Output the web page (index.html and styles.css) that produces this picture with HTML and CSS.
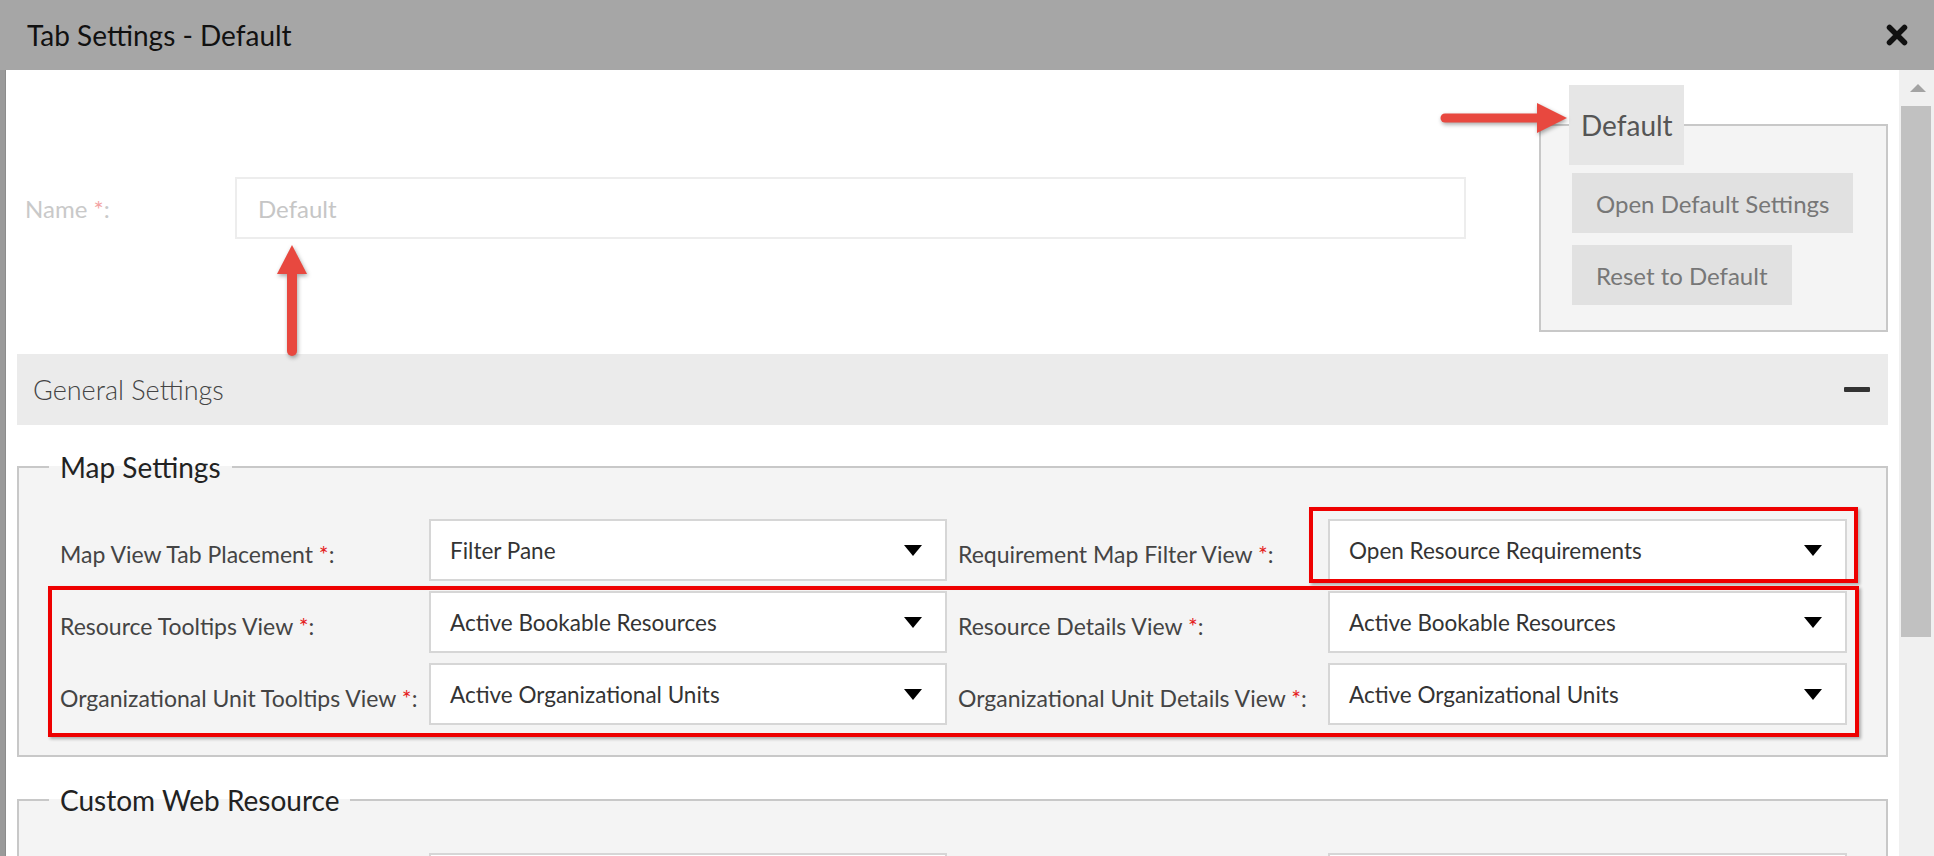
FILE: index.html
```html
<!DOCTYPE html>
<html lang="en">
<head>
<meta charset="utf-8">
<title>Tab Settings - Default</title>
<link rel="stylesheet" href="styles.css">
</head>
<body>
<div class="page">
  <header class="titlebar">
    <h1 class="title">Tab Settings - Default</h1>
    <span class="close" aria-label="Close">
      <svg viewBox="0 0 22 22" width="22" height="22"><path d="M3.5 3.5 L18.5 18.5 M18.5 3.5 L3.5 18.5" stroke="#111" stroke-width="5.5" stroke-linecap="round"/></svg>
    </span>
  </header>
  <div class="main">
    <div class="strip"></div>
    <div class="content">
      <section class="top">
        <div class="name-row">
          <label class="name-label">Name <span class="req-light">*</span>:</label>
          <div class="name-input">Default</div>
        </div>
        <fieldset class="default-box">
          <legend>Default</legend>
          <button class="btn">Open Default Settings</button>
          <button class="btn">Reset to Default</button>
        </fieldset>
      </section>

      <div class="section-bar">
        <span class="section-title">General Settings</span>
        <span class="minus"></span>
      </div>

      <fieldset class="group">
        <legend>Map Settings</legend>
        <div class="grid">
          <label class="lbl">Map View Tab Placement <span class="req">*</span>:</label>
          <div class="select"><span>Filter Pane</span><svg class="caret" viewBox="0 0 18 11"><path d="M0 0 H18 L9 11 Z"/></svg></div>
          <label class="lbl lbl2">Requirement Map Filter View <span class="req">*</span>:</label>
          <div class="select"><span>Open Resource Requirements</span><svg class="caret" viewBox="0 0 18 11"><path d="M0 0 H18 L9 11 Z"/></svg></div>

          <label class="lbl">Resource Tooltips View <span class="req">*</span>:</label>
          <div class="select"><span>Active Bookable Resources</span><svg class="caret" viewBox="0 0 18 11"><path d="M0 0 H18 L9 11 Z"/></svg></div>
          <label class="lbl lbl2">Resource Details View <span class="req">*</span>:</label>
          <div class="select"><span>Active Bookable Resources</span><svg class="caret" viewBox="0 0 18 11"><path d="M0 0 H18 L9 11 Z"/></svg></div>

          <label class="lbl">Organizational Unit Tooltips View <span class="req">*</span>:</label>
          <div class="select"><span>Active Organizational Units</span><svg class="caret" viewBox="0 0 18 11"><path d="M0 0 H18 L9 11 Z"/></svg></div>
          <label class="lbl lbl2">Organizational Unit Details View <span class="req">*</span>:</label>
          <div class="select"><span>Active Organizational Units</span><svg class="caret" viewBox="0 0 18 11"><path d="M0 0 H18 L9 11 Z"/></svg></div>
        </div>
      </fieldset>

      <fieldset class="group group-web">
        <legend>Custom Web Resource</legend>
        <div class="grid">
          <label class="lbl"></label>
          <div class="select"><span></span><svg class="caret" viewBox="0 0 18 11"><path d="M0 0 H18 L9 11 Z"/></svg></div>
          <label class="lbl lbl2"></label>
          <div class="select"><span></span><svg class="caret" viewBox="0 0 18 11"><path d="M0 0 H18 L9 11 Z"/></svg></div>
        </div>
      </fieldset>
    </div>
    <div class="scrollbar">
      <div class="sb-up"><span class="sb-arrow"></span></div>
      <div class="sb-thumb"></div>
    </div>
  </div>

  <div class="annot annot-1"></div>
  <div class="annot annot-2"></div>

  <svg class="arrow arrow-up" viewBox="0 0 46 126" width="46" height="126">
    <line x1="22" y1="32" x2="22" y2="113" stroke="#e8483f" stroke-width="10" stroke-linecap="round"/>
    <polygon points="7,36 22,7 37,36" fill="#e8483f"/>
  </svg>
  <svg class="arrow arrow-right" viewBox="0 0 140 42" width="140" height="42">
    <line x1="13" y1="20" x2="108" y2="20" stroke="#e8483f" stroke-width="9" stroke-linecap="round"/>
    <polygon points="105,5 135,20 105,35" fill="#e8483f"/>
  </svg>
</div>
</body>
</html>
```

FILE: styles.css
```css
html, body {
  margin: 0;
  padding: 0;
  height: 856px;
  overflow: hidden;
}

body {
  font-family: Lato, "Open Sans", "Liberation Sans", sans-serif;
  background: #ffffff;
  color: #333;
}

.page {
  position: relative;
  width: 1934px;
  height: 856px;
  overflow: hidden;
}

/* title bar */
.titlebar {
  height: 70px;
  background: #a6a6a6;
  display: flex;
  align-items: center;
  justify-content: space-between;
  padding: 0 26px 0 27px;
  box-sizing: border-box;
}

.title {
  margin: 0;
  font-size: 28px;
  font-weight: 400;
  color: #111;
}

.close {
  width: 22px;
  height: 22px;
  display: block;
}

.close svg {
  display: block;
}

/* main area */
.main {
  display: flex;
  height: 786px;
}

.strip {
  width: 5px;
  background: #9a9a9a;
  border-right: 1px solid #8c8c8c;
  flex: none;
}

.content {
  flex: 1;
  padding: 0 11px;
  background: #fff;
  overflow: hidden;
  min-width: 0;
}

/* top section */
.top {
  display: flex;
  justify-content: space-between;
  align-items: flex-start;
  padding-top: 15px;
  height: 284px;
  box-sizing: border-box;
}

.name-row {
  display: flex;
  align-items: center;
  margin-top: 92px;
}

.name-label {
  width: 218px;
  padding-left: 8px;
  box-sizing: border-box;
  font-size: 24px;
  color: #c9c9c9;
}

.req-light {
  color: #f3a3a3;
}

.name-input {
  width: 1231px;
  height: 62px;
  box-sizing: border-box;
  border: 2px solid #ededed;
  padding-left: 21px;
  display: flex;
  align-items: center;
  font-size: 24px;
  color: #c6c6c6;
}

.default-box {
  width: 349px;
  margin: 0;
  box-sizing: border-box;
  border: 2px solid #c8c8c8;
  background: #f4f4f4;
  padding: 8px 20px 25px 31px;
  display: flex;
  flex-direction: column;
  align-items: flex-start;
  gap: 12px;
}

.default-box legend {
  margin-left: -3px;
  padding: 0 11px 0 12px;
  line-height: 80px;
  font-size: 28px;
  color: #555;
  background: #e6e6e6;
}

.btn {
  height: 60px;
  padding: 0 24px;
  border: none;
  background: #e1e1e1;
  font-family: inherit;
  font-size: 24px;
  color: #777;
}

/* section bar */
.section-bar {
  height: 71px;
  background: #ebebeb;
  display: flex;
  align-items: center;
  justify-content: space-between;
  padding: 0 18px 0 16px;
}

.section-title {
  font-size: 27px;
  font-weight: 300;
  color: #444;
}

.minus {
  width: 26px;
  height: 5px;
  border-radius: 1px;
  background: #333;
}

/* groups */
.group {
  margin: 24px 0 0;
  border: 2px solid #c8c8c8;
  background: #f4f4f4;
  padding: 34px 39px 30px 41px;
}

.group legend {
  margin-left: -11px;
  padding: 0 11px;
  font-size: 28px;
  line-height: 36px;
  color: #222;
}

.group-web {
  margin-top: 25px;
  padding-top: 35px;
}

.grid {
  display: grid;
  grid-template-columns: 369px 518px 381px 519px;
  row-gap: 10px;
  align-items: center;
}

.lbl {
  font-size: 23px;
  color: #444;
  padding-top: 8px;
  white-space: nowrap;
}

.lbl2 {
  padding-left: 11px;
}

.req {
  color: #e52020;
}

.select {
  height: 62px;
  box-sizing: border-box;
  background: #fff;
  border: 2px solid #d6d6d6;
  display: flex;
  align-items: center;
  justify-content: space-between;
  padding: 0 23px 0 19px;
  font-size: 22.5px;
  color: #333;
  white-space: nowrap;
}

.caret {
  width: 18px;
  height: 11px;
  fill: #000;
  flex: none;
}

/* scrollbar */
.scrollbar {
  width: 35px;
  flex: none;
  background: #f0f0f0;
  display: flex;
  flex-direction: column;
}

.sb-up {
  height: 36px;
  display: flex;
  align-items: center;
  justify-content: center;
}

.sb-arrow {
  width: 0;
  height: 0;
  border-left: 8px solid transparent;
  border-right: 8px solid transparent;
  border-bottom: 8px solid #a3a3a3;
  margin-left: 2px;
}

.sb-thumb {
  height: 531px;
  margin: 0 3px 0 2px;
  background: #c1c1c1;
}

/* annotations */
.annot {
  position: absolute;
  box-sizing: border-box;
  border: 4px solid #ee0000;
  box-shadow: 2px 2px 3px rgba(0, 0, 0, 0.3);
}

.annot-1 {
  left: 1309px;
  top: 507px;
  width: 549px;
  height: 76px;
}

.annot-2 {
  left: 48px;
  top: 586px;
  width: 1811px;
  height: 151px;
}

.arrow {
  position: absolute;
  filter: drop-shadow(1px 2px 2px rgba(0, 0, 0, 0.35));
}

.arrow-up {
  left: 270px;
  top: 238px;
}

.arrow-right {
  left: 1432px;
  top: 98px;
}
```
